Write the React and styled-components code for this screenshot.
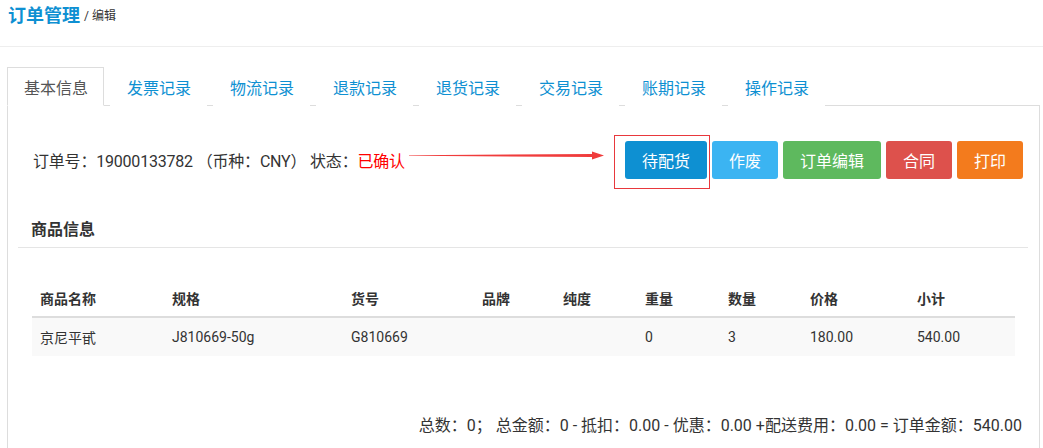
import React from 'react';
import styled, { createGlobalStyle } from 'styled-components';

const GlobalStyle = createGlobalStyle`
  html, body {
    margin: 0;
    padding: 0;
    background: #fff;
  }
  body {
    font-family: Roboto, "Noto Sans CJK SC", sans-serif;
    color: #333;
  }
`;

const Page = styled.div`
  width: 1043px;
  height: 448px;
  overflow: hidden;
  display: flex;
  flex-direction: column;
`;

const Header = styled.div`
  height: 46px;
  display: flex;
  align-items: center;
  padding: 0 8px;
  border-bottom: 1px solid #eee;
  flex-shrink: 0;
`;

const HeaderTitle = styled.span`
  font-size: 18px;
  font-weight: bold;
  color: #0e90d2;
  margin-top: -19px;
`;

const HeaderSub = styled.span`
  font-size: 12px;
  color: #333;
  margin: -17px 0 0 4px;
`;

const Body = styled.div`
  flex: 1;
  display: flex;
  flex-direction: column;
  padding: 20px 3px 0 7px;
`;

const Tabs = styled.ul`
  list-style: none;
  margin: 0;
  padding: 0;
  display: flex;
  border-bottom: 1px solid #ddd;
  height: 38px;
`;

const Tab = styled.li`
  width: 97px;
  margin-right: 6px;
  margin-bottom: -1px;
  box-sizing: border-box;
  display: flex;
  align-items: center;
  padding: 0 0 0 16px;
  font-size: 16px;
  color: ${(p) => (p.$active ? '#555' : '#0e90d2')};
  border: 1px solid ${(p) => (p.$active ? '#ddd' : 'transparent')};
  border-bottom-color: ${(p) => (p.$active ? '#fff' : 'transparent')};
  background: #fff;
  cursor: pointer;
`;

const Panel = styled.div`
  flex: 1;
  border-left: 1px solid #ddd;
  border-right: 1px solid #ddd;
  padding: 0 10px;
  display: flex;
  flex-direction: column;
`;

const OrderBar = styled.div`
  position: relative;
  display: flex;
  align-items: center;
  justify-content: space-between;
  margin-top: 35px;
  height: 38px;
  padding: 0 6px 0 15px;
`;

const OrderText = styled.div`
  font-size: 16px;
  letter-spacing: -0.2px;
  color: #333;
`;

const Status = styled.span`
  color: #f00;
`;

const Arrow = styled.svg`
  position: absolute;
  left: 391px;
  top: 9px;
`;

const Buttons = styled.div`
  display: flex;
  gap: 5px;
`;

const ButtonWrap = styled.div`
  position: relative;
`;

const Highlight = styled.div`
  position: absolute;
  left: -11px;
  right: -3px;
  top: -6px;
  bottom: -10px;
  border: 1px solid #e8383d;
  pointer-events: none;
`;

const Button = styled.button`
  height: 38px;
  padding: 0 17px;
  border: none;
  border-radius: 3px;
  font-family: inherit;
  font-size: 16px;
  color: #fff;
  background: ${(p) => p.$color};
  cursor: pointer;
`;

const SectionTitle = styled.div`
  margin-top: 30px;
  height: 38px;
  display: flex;
  align-items: center;
  padding: 0 13px;
  font-size: 16px;
  font-weight: bold;
  color: #333;
  border-bottom: 1px solid #e5e5e5;
  margin-right: 1px;
`;

const Table = styled.table`
  margin: 32px 0 0 14px;
  width: 983px;
  border-collapse: collapse;
  table-layout: fixed;
  font-size: 14px;
`;

const Th = styled.th`
  text-align: left;
  font-weight: bold;
  padding: 0 8px 8px;
  height: 37px;
  box-sizing: border-box;
  vertical-align: bottom;
  border-bottom: 2px solid #ddd;
  color: #333;
`;

const Td = styled.td`
  padding: 0 8px;
  height: 38px;
  background: #f9f9f9;
  color: #333;
`;

const Footer = styled.div`
  margin-top: 56px;
  text-align: right;
  font-size: 16px;
  padding-right: 7px;
  color: #333;
`;

const tabs = ['基本信息', '发票记录', '物流记录', '退款记录', '退货记录', '交易记录', '账期记录', '操作记录'];

const actions = [
  { label: '待配货', color: '#0e90d2', marked: true },
  { label: '作废', color: '#3bb4f2' },
  { label: '订单编辑', color: '#5eb95e' },
  { label: '合同', color: '#dd514c' },
  { label: '打印', color: '#f37b1d' },
];

const columns = [
  { title: '商品名称', width: 132 },
  { title: '规格', width: 179 },
  { title: '货号', width: 131 },
  { title: '品牌', width: 81 },
  { title: '纯度', width: 82 },
  { title: '重量', width: 83 },
  { title: '数量', width: 82 },
  { title: '价格', width: 107 },
  { title: '小计', width: 106 },
];

const rows = [['京尼平甙', 'J810669-50g', 'G810669', '', '', '0', '3', '180.00', '540.00']];

const App = () => {
  return (
    <Page>
      <GlobalStyle />
      <Header>
        <HeaderTitle>订单管理</HeaderTitle>
        <HeaderSub>/ 编辑</HeaderSub>
      </Header>
      <Body>
        <Tabs>
          {tabs.map((t, i) => (
            <Tab key={t} $active={i === 0}>
              {t}
            </Tab>
          ))}
        </Tabs>
        <Panel>
          <OrderBar>
            <OrderText>
              订单号：19000133782 （币种：CNY） 状态：<Status>已确认</Status>
            </OrderText>
            <Arrow width="196" height="11" viewBox="0 0 196 11">
              <polygon points="0,5.2 184,4 184,7 0,5.8" fill="#f03c3c" />
              <polygon points="183,1.5 195,5.5 183,9.5" fill="#f03c3c" />
            </Arrow>
            <Buttons>
              {actions.map((a) => (
                <ButtonWrap key={a.label}>
                  {a.marked && <Highlight />}
                  <Button $color={a.color}>{a.label}</Button>
                </ButtonWrap>
              ))}
            </Buttons>
          </OrderBar>

          <SectionTitle>商品信息</SectionTitle>

          <Table>
            <colgroup>
              {columns.map((c) => (
                <col key={c.title} style={{ width: c.width }} />
              ))}
            </colgroup>
            <thead>
              <tr>
                {columns.map((c) => (
                  <Th key={c.title}>{c.title}</Th>
                ))}
              </tr>
            </thead>
            <tbody>
              {rows.map((r, i) => (
                <tr key={i}>
                  {r.map((cell, j) => (
                    <Td key={j}>{cell}</Td>
                  ))}
                </tr>
              ))}
            </tbody>
          </Table>

          <Footer>
            总数：0； 总金额：0 - 抵扣：0.00 - 优惠：0.00 +配送费用：0.00 = 订单金额：540.00
          </Footer>
        </Panel>
      </Body>
    </Page>
  );
};

export default App;
